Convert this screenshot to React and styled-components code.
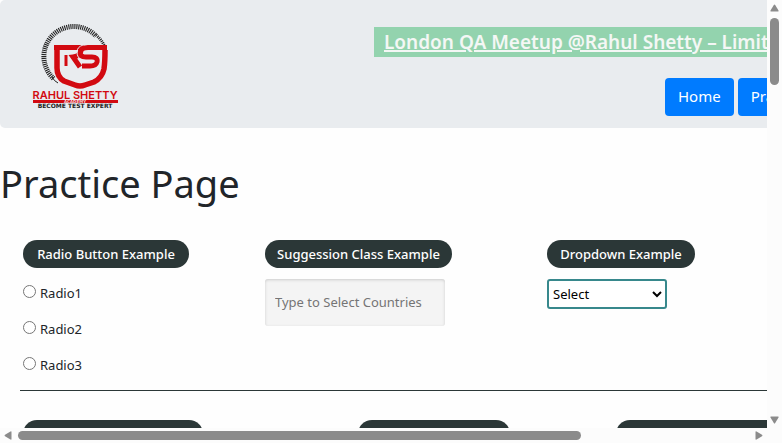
import React from "react";
import styled, { createGlobalStyle } from "styled-components";

const Global = createGlobalStyle`
  *, *::before, *::after { box-sizing: border-box; }
  body { margin: 0; background: #fefefe; color: #212529; font: 14px/24px "Noto Sans", sans-serif; }
  button, input, select { font-family: inherit; }
`;

const Shell = styled.div`
  display: grid;
  grid-template-columns: minmax(0, 1fr) 15px;
  grid-template-rows: minmax(0, 1fr) 15px;
  height: 100vh;
`;
const Viewport = styled.main`
  overflow: hidden;
`;
const Page = styled.div`
  min-width: 1000px;
`;

const Header = styled.header`
  display: flex;
  justify-content: space-between;
  height: 128px;
  padding: 22px 32px;
  background: #e9ecef;
  border-radius: 5px;
`;
const Logo = styled.svg`
  width: 88px;
  height: 88px;
  flex: none;
`;
const HeaderSide = styled.div`
  display: flex;
  flex-direction: column;
  width: 626px;
  flex: none;
  margin-right: -32px;
  padding-top: 5px;
  gap: 21px;
`;
const Banner = styled.a`
  display: block;
  padding: 0 10px;
  background: #93d3ae;
  color: #f4f7f5;
  font-size: 19px;
  font-weight: 600;
  line-height: 30px;
  text-decoration: underline;
  text-decoration-thickness: 2px;
  white-space: nowrap;
`;
const Nav = styled.nav`
  display: flex;
  gap: 4px;
  padding-left: 291px;
`;
const NavButton = styled.button`
  height: 38px;
  padding: 0 13px 2px;
  border: 0;
  border-radius: 4px;
  background: #007bff;
  color: #fff;
  font-size: 15px;
`;

const Title = styled.h1`
  margin: 31px 0 33px;
  font-size: 38px;
  font-weight: 400;
  line-height: 48px;
`;
const Row = styled.section`
  display: grid;
  grid-template-columns: ${(p) => p.$columns};
  margin-left: 20px;
  padding: 0 3px;
  align-items: start;
`;
const Group = styled.div`
  min-width: 0;
`;
const Pill = styled.h2`
  width: ${(p) => p.$width};
  margin: 0 0 11px;
  border-radius: 14px;
  background: #2b3737;
  color: #fff;
  font-size: 13px;
  font-weight: 500;
  line-height: 28px;
  text-align: center;
  white-space: nowrap;
`;
const Radios = styled.div`
  display: grid;
  gap: 12px;
  padding: 2px 0 13px;
`;
const RadioLabel = styled.label`
  display: flex;
  align-items: center;
  gap: 4px;
  font-size: 13px;
  line-height: 24px;
`;
const Radio = styled.input`
  width: 13px;
  height: 13px;
  margin: 0 0 3px;
`;
const TextField = styled.input`
  display: block;
  width: 180px;
  height: 47px;
  padding: 0 10px 2px;
  border: 0;
  border-radius: 3px;
  background: #f4f4f4;
  box-shadow: inset 0 1px 3px #ccc;
  font-size: 13px;
  &::placeholder { color: #757575; }
`;
const Select = styled.select`
  display: block;
  width: 120px;
  height: 30px;
  padding: 0;
  border: 2px solid #37888c;
  border-radius: 3px;
  background: #fff;
  color: #000;
  font-size: 13px;
`;
const Rule = styled.hr`
  margin: 0 0 29px 20px;
  border: 0;
  border-top: 1px solid #2b3737;
`;

const Bar = styled.div`
  display: flex;
  flex-direction: ${(p) => (p.$vertical ? "column" : "row")};
  align-items: center;
  justify-content: space-between;
  padding: ${(p) => (p.$vertical ? "4px 0" : "0 4px")};
  background: #fcfcfc;
`;
const Track = styled.div`
  display: flex;
  flex: 1;
  flex-direction: ${(p) => (p.$vertical ? "column" : "row")};
  margin: ${(p) => (p.$vertical ? "6px 0" : "0 6px")};
`;
const Thumb = styled.div`
  width: ${(p) => (p.$vertical ? "9px" : "77%")};
  height: ${(p) => (p.$vertical ? "17%" : "9px")};
  border-radius: 5px;
  background: #8b8b8b;
`;
const Arrow = styled.svg`
  display: block;
  flex: none;
  fill: #8b8b8b;
`;
const Corner = styled.div`
  background: #fcfcfc;
`;

function ScrollBar({ vertical }) {
  return (
    <Bar $vertical={vertical} aria-hidden="true">
      {vertical ? (
        <Arrow width="9" height="8"><path d="M1 7.5h7Q9 7.5 8.5 6.5L5.2 1Q4.5 0 3.8 1L.5 6.5Q0 7.5 1 7.5Z" /></Arrow>
      ) : (
        <Arrow width="8" height="9"><path d="M7.5 1v7Q7.5 9 6.5 8.5L1 5.2Q0 4.5 1 3.8L6.5.5Q7.5 0 7.5 1Z" /></Arrow>
      )}
      <Track $vertical={vertical}><Thumb $vertical={vertical} /></Track>
      {vertical ? (
        <Arrow width="9" height="8"><path d="M1 .5h7Q9 .5 8.5 1.5L5.2 7Q4.5 8 3.8 7L.5 1.5Q0 .5 1 .5Z" /></Arrow>
      ) : (
        <Arrow width="8" height="9"><path d="M.5 1v7Q.5 9 1.5 8.5L7 5.2Q8 4.5 7 3.8L1.5.5Q.5 0 .5 1Z" /></Arrow>
      )}
    </Bar>
  );
}

function AcademyLogo() {
  return (
    <Logo viewBox="0 0 88 88" role="img" aria-label="Rahul Shetty Academy">
      <path d="M21.5 56.5A30 30 0 0 1 42 4.5A30 30 0 0 1 64 14" fill="none" stroke="#222" strokeWidth="5" strokeDasharray="1.1 .9" />
      <path d="M64 13A31 31 0 0 1 73 25" fill="none" stroke="#222" strokeWidth="3" strokeDasharray="1.1 .9" />
      <path d="M20 55Q22 59 26 61" fill="none" stroke="#222" strokeWidth="1" />
      <path d="M25 25V46Q25 55 32 59L43 63Q48 65 53 63L62 60Q70 56 72 47Q73 40 73 28" fill="none" stroke="#d20a11" strokeWidth="5.5" />
      <path d="M22 25.5H49Q50 34 41 35L48 45" fill="none" stroke="#d20a11" strokeWidth="5" />
      <path d="M34 33V44" fill="none" stroke="#d20a11" strokeWidth="3" />
      <path d="M75 25.5H56Q48 26 48 30.5Q48 35 54 35H60Q66 35 65 40Q64 44 58 44H50" fill="none" stroke="#d20a11" strokeWidth="5" />
      <path d="M51 23Q45 25 45 30Q45 36 50 38" fill="none" stroke="#e9ecef" strokeWidth="1" />
      <text x="43" y="77" fill="#d20a11" textAnchor="middle" fontFamily="Inter" fontSize="11" fontWeight="600">RAHUL SHETTY</text>
      <path d="M1 78H86V81H1Z" fill="#d20a11" />
      <text x="43" y="81" fill="#f4d4d6" textAnchor="middle" fontFamily="DejaVu Sans" fontSize="4" fontWeight="700">ACADEMY</text>
      <text x="43" y="86" fill="#222" textAnchor="middle" fontFamily="DejaVu Sans" fontSize="6" fontWeight="700">BECOME TEST EXPERT</text>
    </Logo>
  );
}

export default function App() {
  return (
    <>
      <Global />
      <Shell>
        <Viewport>
          <Page>
            <Header>
              <AcademyLogo />
              <HeaderSide>
                <Banner href="#meetup">London QA Meetup @Rahul Shetty – Limited Seats</Banner>
                <Nav>
                  <NavButton>Home</NavButton>
                  <NavButton>Practice</NavButton>
                </Nav>
              </HeaderSide>
            </Header>
            <Title>Practice Page</Title>
            <Row $columns="242px 282px 1fr">
              <Group role="radiogroup" aria-labelledby="radio-title">
                <Pill id="radio-title" $width="166px">Radio Button Example</Pill>
                <Radios>
                  {["Radio1", "Radio2", "Radio3"].map((name) => (
                    <RadioLabel key={name}><Radio type="radio" name="choice" value={name} />{name}</RadioLabel>
                  ))}
                </Radios>
              </Group>
              <Group>
                <Pill id="suggestion-title" $width="187px">Suggession Class Example</Pill>
                <TextField placeholder="Type to Select Countries" aria-labelledby="suggestion-title" />
              </Group>
              <Group>
                <Pill id="dropdown-title" $width="148px">Dropdown Example</Pill>
                <Select aria-labelledby="dropdown-title"><option>Select</option></Select>
              </Group>
            </Row>
            <Rule />
            <Row $columns="335px 258px 1fr">
              <Pill $width="180px">Switch Window Example</Pill>
              <Pill $width="152px">Switch Tab Example</Pill>
              <Pill $width="240px">Switch To Alert Example</Pill>
            </Row>
          </Page>
        </Viewport>
        <ScrollBar vertical />
        <ScrollBar />
        <Corner />
      </Shell>
    </>
  );
}
